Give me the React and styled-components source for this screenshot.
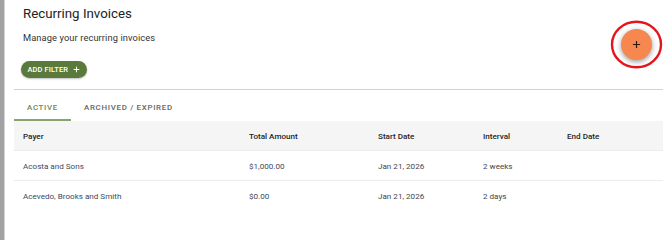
import React from "react";
import styled, { createGlobalStyle } from "styled-components";

const GlobalStyle = createGlobalStyle`
  html, body { margin: 0; padding: 0; background: #fff; }
  body { font-family: Roboto, "Liberation Sans", Arial, sans-serif; }
  * { box-sizing: border-box; }
`;

const Page = styled.div`
  display: flex;
  width: 670px;
  height: 240px;
  overflow: hidden;
  background: #fff;
`;

const Rail = styled.div`
  width: 5px;
  flex: none;
  background: #a2a2a2;
  border-right: 1px solid #d4d4d4;
`;

const Main = styled.main`
  flex: 1;
  padding: 0 7px 0 9px;
  display: flex;
  flex-direction: column;
`;

const Header = styled.header`
  display: flex;
  justify-content: space-between;
  align-items: flex-start;
  padding: 6px 11px 11px 9px;
`;

const HeadText = styled.div`
  display: flex;
  flex-direction: column;
`;

const Title = styled.h1`
  margin: 0;
  font-size: 13.3px;
  line-height: 16px;
  font-weight: 400;
  color: #222;
`;

const Subtitle = styled.p`
  margin: 8.5px 0 0;
  font-size: 9.3px;
  line-height: 14px;
  color: #333;
  letter-spacing: 0.1px;
`;

const FilterButton = styled.button`
  margin: 16.5px 0 0 -2.5px;
  align-self: flex-start;
  height: 17px;
  padding: 0 7px 0 7px;
  border: none;
  border-radius: 9px;
  background: #5a7a3c;
  color: #fff;
  font-family: inherit;
  font-size: 7.5px;
  font-weight: 500;
  letter-spacing: 0.1px;
  display: flex;
  align-items: center;
  gap: 5px;
  box-shadow: 0 1px 2px rgba(0, 0, 0, 0.25);
`;

const FabWrap = styled.div`
  position: relative;
  margin-top: 23px;
  width: 31px;
  height: 31px;
`;

const Fab = styled.button`
  width: 31px;
  height: 31px;
  border-radius: 50%;
  border: none;
  padding: 0;
  background: #f5874f;
  box-shadow: 0 2px 4px rgba(0, 0, 0, 0.3), 0 1px 8px rgba(0, 0, 0, 0.12);
  display: flex;
  align-items: center;
  justify-content: center;
`;

const Annotation = styled.svg`
  position: absolute;
  left: -16px;
  top: -9px;
  overflow: visible;
  pointer-events: none;
`;

const Tabs = styled.nav`
  display: flex;
  border-top: 1px solid #d2d2d2;
`;

const Tab = styled.div`
  padding: 11.5px 13px 6.5px;
  line-height: 11px;
  font-size: 7.9px;
  font-weight: 500;
  letter-spacing: 0.7px;
  text-transform: uppercase;
  color: ${(p) => (p.$active ? "#6b8c4f" : "#666")};
  border-bottom: 2px solid ${(p) => (p.$active ? "#88a46d" : "transparent")};
`;

const Table = styled.div`
  display: flex;
  flex-direction: column;
`;

const Row = styled.div`
  display: grid;
  grid-template-columns: 226px 129px 105px 84px 1fr;
  align-items: center;
  height: 30px;
  padding-left: 9px;
  font-size: 8.1px;
  background: ${(p) => (p.$head ? "#f5f5f5" : "#fff")};
  border-bottom: 1px solid ${(p) => (p.$line ? "#ececec" : "transparent")};
`;

const HeadCell = styled.div`
  font-weight: 500;
  color: #1f1f1f;
`;

const Cell = styled.div`
  color: ${(p) => (p.$link ? "#3b4a5e" : "#454545")};
`;

const PlusIcon = ({ size, color, width }) => (
  <svg width={size} height={size} viewBox="0 0 10 10">
    <path d="M5 1v8M1 5h8" stroke={color} strokeWidth={width} />
  </svg>
);

const rows = [
  { payer: "Acosta and Sons", amount: "$1,000.00", start: "Jan 21, 2026", interval: "2 weeks", end: "" },
  { payer: "Acevedo, Brooks and Smith", amount: "$0.00", start: "Jan 21, 2026", interval: "2 days", end: "" },
];

export default function App() {
  return (
    <>
      <GlobalStyle />
      <Page>
        <Rail />
        <Main>
          <Header>
            <HeadText>
              <Title>Recurring Invoices</Title>
              <Subtitle>Manage your recurring invoices</Subtitle>
              <FilterButton>
                ADD FILTER
                <PlusIcon size={7} color="#fff" width={1.4} />
              </FilterButton>
            </HeadText>
            <FabWrap>
              <Fab aria-label="Add">
                <PlusIcon size={9} color="#2a1a10" width={1.3} />
              </Fab>
              <Annotation width="63" height="48" viewBox="0 0 63 48">
                <ellipse cx="31.5" cy="24.5" rx="24.5" ry="22.8" fill="none" stroke="#e3141c" strokeWidth="2.4" />
              </Annotation>
            </FabWrap>
          </Header>
          <Tabs>
            <Tab $active>Active</Tab>
            <Tab>Archived / Expired</Tab>
          </Tabs>
          <Table>
            <Row $head $line>
              <HeadCell>Payer</HeadCell>
              <HeadCell>Total Amount</HeadCell>
              <HeadCell>Start Date</HeadCell>
              <HeadCell>Interval</HeadCell>
              <HeadCell>End Date</HeadCell>
            </Row>
            {rows.map((r, i) => (
              <Row key={r.payer} $line={i < rows.length - 1}>
                <Cell $link>{r.payer}</Cell>
                <Cell $link>{r.amount}</Cell>
                <Cell>{r.start}</Cell>
                <Cell>{r.interval}</Cell>
                <Cell>{r.end}</Cell>
              </Row>
            ))}
          </Table>
        </Main>
      </Page>
    </>
  );
}
